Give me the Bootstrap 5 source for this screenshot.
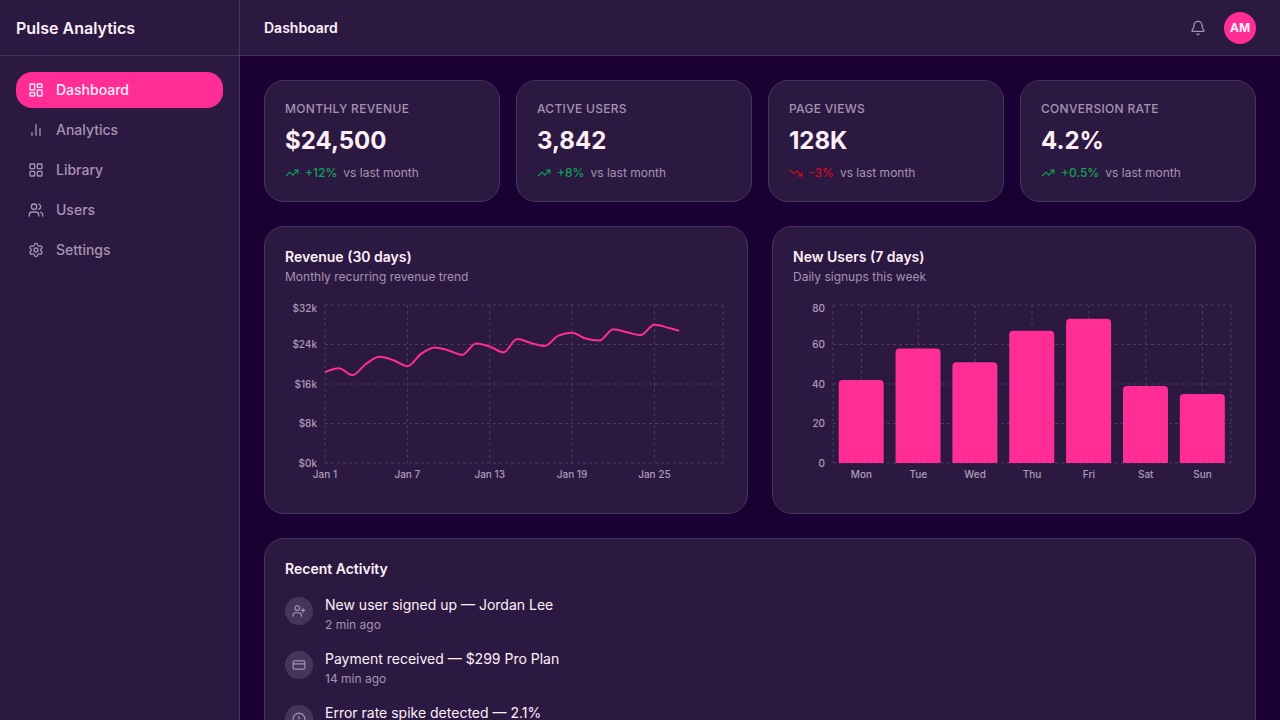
<!DOCTYPE html>
<html lang="en">
<head>
<meta charset="utf-8">
<meta name="viewport" content="width=device-width, initial-scale=1">
<title>Pulse Analytics</title>
<link href="https://cdn.jsdelivr.net/npm/bootstrap@5.3.0/dist/css/bootstrap.min.css" rel="stylesheet">
<style>
  :root {
    --page: #1a0033;
    --panel: #2c1942;
    --line: #47365b;
    --ink: #fff0f8;
    --dim: #a594ae;
    --pink: #ff2d95;
    --up: #0aa551;
    --down: #d40a20;
  }
  body {
    font-family: Inter, "Liberation Sans", sans-serif;
    font-size: 14px;
    line-height: 20px;
    color: var(--ink);
    background: var(--page);
  }
  svg.ico {
    width: 16px; height: 16px; flex: none;
    fill: none; stroke: currentColor; stroke-width: 2;
    stroke-linecap: round; stroke-linejoin: round;
  }
  svg.ico-sm { width: 14px; height: 14px; }
  .sidebar { width: 240px; flex: none; background: var(--panel); border-right: 1px solid var(--line); }
  .bar-top { height: 56px; flex: none; background: var(--panel); border-bottom: 1px solid var(--line); }
  .brand { font-size: 16px; line-height: 24px; font-weight: 600; color: var(--ink); text-decoration: none; }
  .side-link {
    gap: 12px; padding: 8px 12px; border-radius: 16px;
    font-weight: 500; color: var(--dim);
  }
  .side-link:hover { color: var(--ink); }
  .side-link.active { background: var(--pink); color: var(--ink); }
  .heading { font-size: 14px; line-height: 20px; font-weight: 600; margin: 0; }
  .bell { width: 36px; height: 36px; color: var(--dim); border: 0; }
  .bell:hover { color: var(--ink); }
  .avatar {
    width: 32px; height: 32px; border: 0; background: var(--pink); color: var(--ink);
    font-size: 12px; line-height: 16px; font-weight: 700;
  }
  .content { overflow-y: auto; scrollbar-width: none; }
  .content::-webkit-scrollbar { display: none; }
  .panel { background: var(--panel); border: 1px solid var(--line); border-radius: 20px; padding: 20px; color: var(--ink); }
  .caption { font-size: 12px; line-height: 16px; color: var(--dim); margin: 0; }
  .heading + .caption { margin-top: 2px; }
  .stat-label { font-weight: 500; letter-spacing: 0.025em; }
  .stat-value { font-size: 24px; line-height: 32px; font-weight: 700; }
  .delta { gap: 6px; }
  .up { color: var(--up); font-weight: 500; }
  .down { color: var(--down); font-weight: 500; }
  .plot { height: 192px; }
  .plot svg { display: block; width: 100%; height: 100%; overflow: visible; }
  .plot text { font-size: 10px; font-weight: 500; fill: #ad9db6; }
  .plot .grid { stroke: #4c3b61; stroke-dasharray: 3 3; fill: none; }
  .plot .trend { stroke: var(--pink); stroke-width: 2; fill: none; }
  .plot .col-bar { fill: var(--pink); }
  .activity { gap: 12px; }
  .activity .caption { margin-top: 2px; }
  .dot { width: 28px; height: 28px; margin-top: 2px; flex: none; background: #46355a; color: var(--dim); }
</style>
</head>
<body>
<div class="d-flex vh-100 overflow-hidden">
  <aside class="sidebar d-none d-md-flex flex-column">
    <div class="bar-top d-flex align-items-center px-3">
      <a class="brand" href="#">Pulse Analytics</a>
    </div>
    <nav class="nav flex-column flex-nowrap gap-1 p-3" aria-label="Main">
      <a class="side-link active d-flex align-items-center text-decoration-none" href="#" aria-current="page">
        <svg class="ico" viewBox="0 0 24 24"><rect x="3" y="3" width="7" height="9" rx="1"/><rect x="14" y="3" width="7" height="5" rx="1"/><rect x="14" y="12" width="7" height="9" rx="1"/><rect x="3" y="16" width="7" height="5" rx="1"/></svg>
        Dashboard</a>
      <a class="side-link d-flex align-items-center text-decoration-none" href="#">
        <svg class="ico" viewBox="0 0 24 24"><path d="M6 20v-4M12 20V4M18 20V10"/></svg>
        Analytics</a>
      <a class="side-link d-flex align-items-center text-decoration-none" href="#">
        <svg class="ico" viewBox="0 0 24 24"><rect x="3" y="3" width="7" height="7" rx="1"/><rect x="14" y="3" width="7" height="7" rx="1"/><rect x="14" y="14" width="7" height="7" rx="1"/><rect x="3" y="14" width="7" height="7" rx="1"/></svg>
        Library</a>
      <a class="side-link d-flex align-items-center text-decoration-none" href="#">
        <svg class="ico" viewBox="0 0 24 24"><path d="M16 21v-2a4 4 0 0 0-4-4H6a4 4 0 0 0-4 4v2"/><circle cx="9" cy="7" r="4"/><path d="M22 21v-2a4 4 0 0 0-3-3.87M16 3.13a4 4 0 0 1 0 7.75"/></svg>
        Users</a>
      <a class="side-link d-flex align-items-center text-decoration-none" href="#">
        <svg class="ico" viewBox="0 0 24 24"><path d="M9.671 4.136a2.34 2.34 0 0 1 4.659 0 2.34 2.34 0 0 0 3.319 1.915 2.34 2.34 0 0 1 2.33 4.033 2.34 2.34 0 0 0 0 3.831 2.34 2.34 0 0 1-2.33 4.033 2.34 2.34 0 0 0-3.319 1.915 2.34 2.34 0 0 1-4.659 0 2.34 2.34 0 0 0-3.32-1.915 2.34 2.34 0 0 1-2.33-4.033 2.34 2.34 0 0 0 0-3.831A2.34 2.34 0 0 1 6.35 6.051a2.34 2.34 0 0 0 3.319-1.915"/><circle cx="12" cy="12" r="3"/></svg>
        Settings</a>
    </nav>
  </aside>

  <div class="d-flex flex-column flex-grow-1 overflow-hidden">
    <header class="bar-top d-flex align-items-center justify-content-between px-4">
      <h1 class="heading">Dashboard</h1>
      <div class="d-flex align-items-center gap-2">
        <button type="button" class="bell btn p-0 d-flex align-items-center justify-content-center" aria-label="Notifications">
          <svg class="ico" viewBox="0 0 24 24"><path d="M10.268 21a2 2 0 0 0 3.464 0"/><path d="M3.262 15.326A1 1 0 0 0 4 17h16a1 1 0 0 0 .74-1.673C19.41 13.956 18 12.499 18 8A6 6 0 0 0 6 8c0 4.499-1.411 5.956-2.738 7.326"/></svg>
        </button>
        <button type="button" class="avatar rounded-circle p-0">AM</button>
      </div>
    </header>

    <main class="content flex-grow-1 p-4">
      <div class="row g-3">
        <div class="col-sm-6 col-xl-3">
          <section class="panel">
            <p class="caption stat-label">MONTHLY REVENUE</p>
            <div class="stat-value my-2">$24,500</div>
            <p class="caption delta d-flex align-items-center">
              <svg class="ico ico-sm up" viewBox="0 0 24 24"><path d="M16 7h6v6"/><path d="m22 7-8.500 8.500-5-5L2 17"/></svg>
              <span class="up">+12%</span><span>vs last month</span></p>
          </section>
        </div>
        <div class="col-sm-6 col-xl-3">
          <section class="panel">
            <p class="caption stat-label">ACTIVE USERS</p>
            <div class="stat-value my-2">3,842</div>
            <p class="caption delta d-flex align-items-center">
              <svg class="ico ico-sm up" viewBox="0 0 24 24"><path d="M16 7h6v6"/><path d="m22 7-8.500 8.500-5-5L2 17"/></svg>
              <span class="up">+8%</span><span>vs last month</span></p>
          </section>
        </div>
        <div class="col-sm-6 col-xl-3">
          <section class="panel">
            <p class="caption stat-label">PAGE VIEWS</p>
            <div class="stat-value my-2">128K</div>
            <p class="caption delta d-flex align-items-center">
              <svg class="ico ico-sm down" viewBox="0 0 24 24"><path d="M16 17h6v-6"/><path d="m22 17-8.500-8.500-5 5L2 7"/></svg>
              <span class="down">-3%</span><span>vs last month</span></p>
          </section>
        </div>
        <div class="col-sm-6 col-xl-3">
          <section class="panel">
            <p class="caption stat-label">CONVERSION RATE</p>
            <div class="stat-value my-2">4.2%</div>
            <p class="caption delta d-flex align-items-center">
              <svg class="ico ico-sm up" viewBox="0 0 24 24"><path d="M16 7h6v6"/><path d="m22 7-8.500 8.500-5-5L2 17"/></svg>
              <span class="up">+0.5%</span><span>vs last month</span></p>
          </section>
        </div>
      </div>

      <div class="row g-4 mt-0">
        <div class="col-lg-6">
          <section class="panel">
            <h2 class="heading">Revenue (30 days)</h2>
            <p class="caption mb-3">Monthly recurring revenue trend</p>
            <div class="plot" id="revenue"></div>
          </section>
        </div>
        <div class="col-lg-6">
          <section class="panel">
            <h2 class="heading">New Users (7 days)</h2>
            <p class="caption mb-3">Daily signups this week</p>
            <div class="plot" id="signups"></div>
          </section>
        </div>
      </div>

      <section class="panel mt-4">
        <h2 class="heading mb-3">Recent Activity</h2>
        <ul class="list-unstyled d-flex flex-column gap-3 mb-0">
          <li class="activity d-flex">
            <span class="dot rounded-circle d-flex align-items-center justify-content-center"><svg class="ico ico-sm" viewBox="0 0 24 24"><path d="M16 21v-2a4 4 0 0 0-4-4H6a4 4 0 0 0-4 4v2"/><circle cx="9" cy="7" r="4"/><path d="M19 8v6M22 11h-6"/></svg></span>
            <div><div>New user signed up — Jordan Lee</div><div class="caption">2 min ago</div></div>
          </li>
          <li class="activity d-flex">
            <span class="dot rounded-circle d-flex align-items-center justify-content-center"><svg class="ico ico-sm" viewBox="0 0 24 24"><rect x="2" y="5" width="20" height="14" rx="2"/><path d="M2 10h20"/></svg></span>
            <div><div>Payment received — $299 Pro Plan</div><div class="caption">14 min ago</div></div>
          </li>
          <li class="activity d-flex">
            <span class="dot rounded-circle d-flex align-items-center justify-content-center"><svg class="ico ico-sm" viewBox="0 0 24 24"><circle cx="12" cy="12" r="10"/><path d="M12 8v4M12 16h.01"/></svg></span>
            <div>Error rate spike detected — 2.1%</div>
          </li>
        </ul>
      </section>
    </main>
  </div>
</div>
<script src="https://cdn.jsdelivr.net/npm/bootstrap@5.3.0/dist/js/bootstrap.bundle.min.js"></script>
<script>
  // Daily revenue in thousands of dollars, as [day offset, value]
  const revenue = [18.4, 19.2, 17.8, 20.1, 21.5, 20.8, 19.6, 22.1, 23.4, 22.8, 21.9, 24.2, 23.6, 22.4,
    25.1, 24.3, 23.7, 25.8, 26.4, 25.2, 24.8, 27.1, 26.5, 25.9, 28.0, 27.4].map((v, i) => [i, v]);
  revenue.push([25.8, 26.8]);
  const signups = [['Mon', 42], ['Tue', 58], ['Wed', 51], ['Thu', 67], ['Fri', 73], ['Sat', 39], ['Sun', 35]];
  const TOP = 4, BOTTOM = 162, LEFT = 40, RIGHT_PAD = 4;

  function frame(width, yLabels, xs) {
    const right = width - RIGHT_PAD;
    let out = '';
    yLabels.forEach((label, i) => {
      const y = BOTTOM - (BOTTOM - TOP) * i / (yLabels.length - 1);
      out += `<path class="grid" d="M${LEFT} ${y}H${right}"/>`;
      out += `<text x="${LEFT - 8}" y="${Math.floor(Math.max(y, TOP + 3)) + 4}" text-anchor="end">${label}</text>`;
    });
    [...new Set([LEFT, ...xs.map(t => t[0]), right])].forEach(x => {
      out += `<path class="grid" d="M${x} ${TOP}V${BOTTOM}"/>`;
    });
    xs.forEach(([x, label]) => {
      out += `<text x="${x}" y="${BOTTOM + 15}" text-anchor="middle">${label}</text>`;
    });
    return out;
  }

  // Cubic path through the points that never overshoots them
  function monotone(p) {
    const n = p.length, s = [], m = [];
    for (let i = 0; i < n - 1; i++) s.push((p[i + 1][1] - p[i][1]) / (p[i + 1][0] - p[i][0]));
    for (let i = 1; i < n - 1; i++) {
      const h0 = p[i][0] - p[i - 1][0], h1 = p[i + 1][0] - p[i][0];
      const q = (s[i - 1] * h1 + s[i] * h0) / (h0 + h1);
      m[i] = (Math.sign(s[i - 1]) + Math.sign(s[i])) * Math.min(Math.abs(s[i - 1]), Math.abs(s[i]), Math.abs(q) / 2);
    }
    m[0] = (3 * s[0] - m[1]) / 2;
    m[n - 1] = (3 * s[n - 2] - m[n - 2]) / 2;
    let d = `M${p[0]}`;
    for (let i = 1; i < n; i++) {
      const [x0, y0] = p[i - 1], [x1, y1] = p[i], h = (x1 - x0) / 3;
      d += `C${x0 + h},${y0 + h * m[i - 1]} ${x1 - h},${y1 - h * m[i]} ${x1},${y1}`;
    }
    return d;
  }

  function draw() {
    const a = document.getElementById('revenue'), wa = a.clientWidth;
    const step = (wa - LEFT - RIGHT_PAD) / 29;
    const days = [1, 7, 13, 19, 25].map(d => [LEFT + (d - 1) * step, 'Jan ' + d]);
    const pts = revenue.map(([i, v]) => [LEFT + i * step, BOTTOM - v * (BOTTOM - TOP) / 32]);
    a.innerHTML = `<svg role="img">${frame(wa, ['$0k', '$8k', '$16k', '$24k', '$32k'], days)}<path class="trend" d="${monotone(pts)}"/></svg>`;

    const b = document.getElementById('signups'), wb = b.clientWidth;
    const band = (wb - LEFT - RIGHT_PAD) / 7, w = Math.floor(band * 0.8), r = 4;
    const mids = signups.map(([d], i) => [LEFT + band * (i + 0.5), d]);
    const bars = signups.map(([, v], i) => {
      const x = LEFT + band * (i + 0.1), y = BOTTOM - v * (BOTTOM - TOP) / 80;
      return `<path class="col-bar" d="M${x} ${BOTTOM}V${y + r}a${r} ${r} 0 0 1 ${r} ${-r}h${w - 2 * r}a${r} ${r} 0 0 1 ${r} ${r}V${BOTTOM}z"/>`;
    }).join('');
    b.innerHTML = `<svg role="img">${frame(wb, ['0', '20', '40', '60', '80'], mids)}${bars}</svg>`;
  }
  draw();
  addEventListener('resize', draw);
</script>
</body>
</html>
